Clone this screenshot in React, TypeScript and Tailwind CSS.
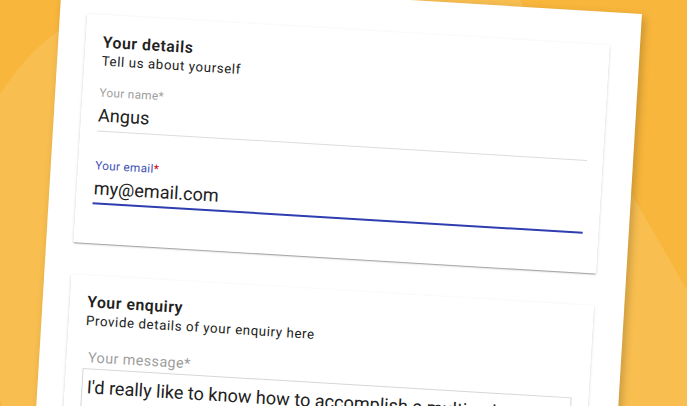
import React from "react";

function Card({ title, subtitle, children }: { title: string; subtitle: string; children: React.ReactNode }) {
  return (
    <section className="h-[229px] w-[523.5px] shrink-0 rounded-[1px] bg-white pl-[17px] pt-[18.5px] shadow-[0_2px_1px_-1px_rgba(0,0,0,0.2),0_1px_1px_0_rgba(0,0,0,0.14),0_1px_3px_0_rgba(0,0,0,0.12)]">
      <h2 className="h-[18px] pl-[0.3px] text-[15.8px] font-semibold leading-[18px] tracking-[0.55px] whitespace-nowrap">{title}</h2>
      <p className="h-[19.5px] pl-[0.3px] text-[13.3px] leading-[19.5px] tracking-[0.6px] whitespace-nowrap">{subtitle}</p>
      {children}
    </section>
  );
}

export default function App() {
  return (
    <main
      className="relative h-[406px] w-[687px] overflow-hidden bg-[#f8b63c] text-[#212121]"
      style={{ fontFamily: 'Roboto, "Liberation Sans", sans-serif' }}
    >
      <svg className="absolute inset-0" width="687" height="406" viewBox="0 0 687 406">
        <path d="M0 94Q25 55 58 31L130 0H520L687 290V406H3L0 400Z" fill="#f8be50" />
      </svg>
      <div className="absolute left-[62px] top-[-21px] flex h-[700px] w-[581px] origin-top-left rotate-[3.45deg] flex-col gap-[31.5px] bg-white pl-[27.3px] pt-[33px] shadow-[3px_3px_8px_rgba(0,0,0,0.2)]">
        <Card title="Your details" subtitle="Tell us about yourself">
          <div className="flex h-[61px] w-[491px] flex-col border-b border-[#dcdcdc]">
            <span className="mt-[13px] h-[20px] text-[11.8px] leading-[19px] tracking-[0.3px] text-[#9e9e9e]">Your name*</span>
            <span className="text-[18.1px] leading-[24px]">Angus</span>
          </div>
          <div className="flex h-[73px] w-[491px] flex-col border-b-2 border-[#2f3db0]">
            <span className="mt-[25px] h-[20px] text-[11.8px] leading-[18px] tracking-[0.3px] text-[#3f51b5]">
              Your email<span className="text-[#d50000]">*</span>
            </span>
            <span className="text-[18.1px] leading-[24px]">my@email.com</span>
          </div>
        </Card>
        <Card title="Your enquiry" subtitle="Provide details of your enquiry here">
          <div className="flex h-[37px] items-end pl-[4.5px] text-[14.4px] leading-[20px] tracking-[0.4px] text-[#9e9e9e]">Your message*</div>
          <div className="h-[100px] w-[490px] overflow-hidden whitespace-nowrap border border-[#d6d6d6] pl-[4px] pt-[6px] text-[18.1px] leading-[24px]">
            I'd really like to know how to accomplish a multi-column t
          </div>
        </Card>
      </div>
    </main>
  );
}
